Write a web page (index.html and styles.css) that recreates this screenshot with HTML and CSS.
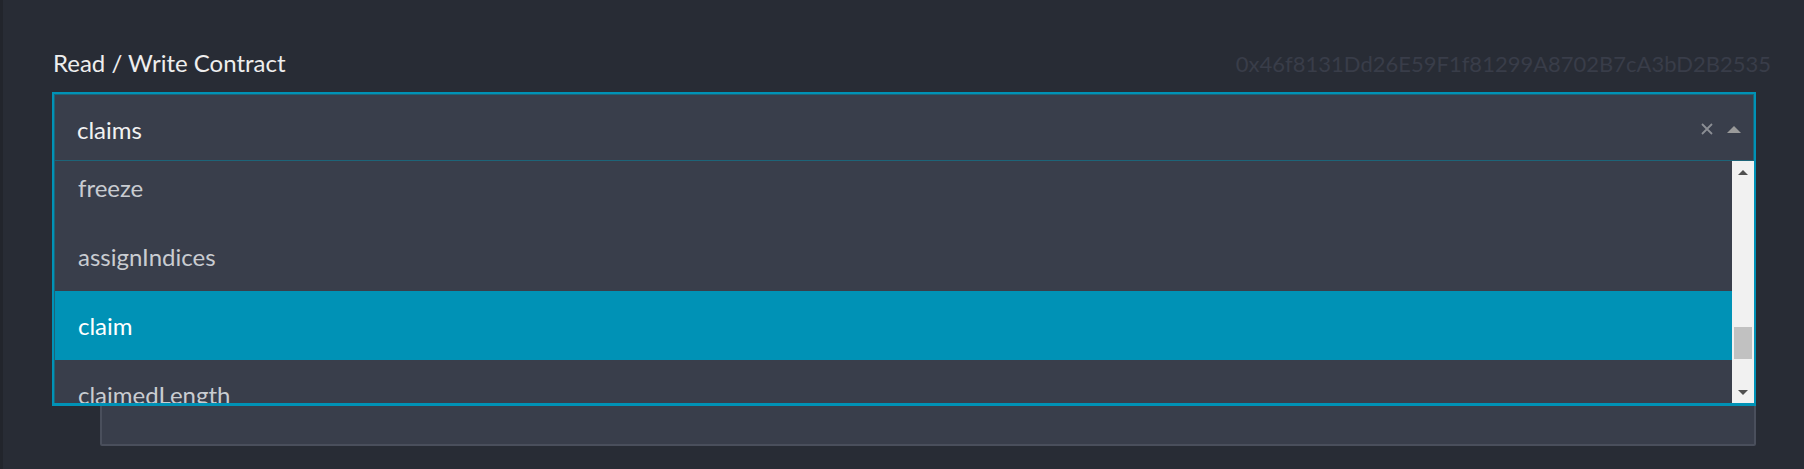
FILE: index.html
```html
<!DOCTYPE html>
<html>
<head>
<meta charset="utf-8">
<link rel="stylesheet" href="styles.css">
</head>
<body>
<div class="page">
  <div class="edge"></div>
  <main class="main">
    <div class="header">
      <div class="label">Read / Write Contract</div>
      <div class="address">0x46f8131Dd26E59F1f81299A8702B7cA3bD2B2535</div>
    </div>
    <div class="select">
      <div class="control">
        <div class="control-inner">
          <div class="value">claims</div>
          <span class="clear">
            <svg width="12" height="12" viewBox="0 0 12 12"><path d="M1 1L11 11M11 1L1 11" stroke="#8b8e94" stroke-width="1.8" fill="none"/></svg>
          </span>
          <span class="caret"></span>
        </div>
      </div>
      <div class="menu">
        <div class="menu-list">
          <div class="menu-inner">
            <div class="option">freeze</div>
            <div class="option">assignIndices</div>
            <div class="option focused">claim</div>
            <div class="option">claimedLength</div>
          </div>
        </div>
        <div class="scrollbar">
          <div class="sb-btn"><span class="tri-up"></span></div>
          <div class="sb-track"><div class="sb-thumb"></div></div>
          <div class="sb-btn"><span class="tri-down"></span></div>
        </div>
      </div>
    </div>
    <div class="lower-box"></div>
  </main>
</div>
</body>
</html>
```
FILE: styles.css
```css
html, body {
  margin: 0;
  padding: 0;
  background: #282c35;
  height: 100%;
  overflow: hidden;
}
.page {
  display: flex;
  height: 469px;
  font-family: Lato, "Open Sans", sans-serif;
}
.edge {
  width: 3px;
  background: #22252c;
}
.main {
  flex: 1;
  padding: 50px 48px 0 49px;
}
.header {
  display: flex;
  justify-content: space-between;
  align-items: baseline;
  height: 26px;
}
.label {
  font-size: 24px;
  line-height: 26px;
  color: #eeeeee;
  padding-left: 1px;
}
.address {
  font-size: 22px;
  line-height: 26px;
  color: #393d49;
  margin-right: -15px;
}
.select {
  position: relative;
  margin-top: 16px;
}
.control {
  border: 2px solid #0092b6;
  border-bottom: 0;
  background: #393e4b;
}
.control-inner {
  height: 65px;
  border: 1px solid #1d6478;
  display: flex;
  align-items: center;
  padding: 0 12px 0 22px;
}
.value {
  flex: 1;
  font-size: 24px;
  color: #f2f2f2;
  padding-top: 3px;
}
.clear {
  display: flex;
  width: 12px;
  height: 12px;
  margin-right: 14px;
  margin-top: 2px;
}
.caret {
  width: 0;
  height: 0;
  border-left: 7px solid transparent;
  border-right: 7px solid transparent;
  border-bottom: 7px solid #9a9a9a;
  margin-top: 3px;
}
.menu {
  position: absolute;
  top: 100%;
  left: 0;
  right: 0;
  height: 245px;
  box-sizing: border-box;
  border: 2px solid #0092b6;
  border-top: 0;
  border-bottom-width: 3px;
  background: #393e4b;
  display: flex;
}
.menu-list {
  flex: 1;
  overflow: hidden;
  border-left: 1px solid #1d6478;
}
.menu-inner {
  margin-top: -8px;
}
.option {
  height: 69px;
  line-height: 69px;
  font-size: 24px;
  color: #c9ccd1;
  padding-left: 23px;
}
.option.focused {
  background: #0092b6;
  color: #ffffff;
  margin-left: -3px;
  padding-left: 26px;
}
.scrollbar {
  width: 22px;
  background: #f1f1f1;
  display: flex;
  flex-direction: column;
}
.sb-btn {
  height: 22px;
  display: flex;
  align-items: center;
  justify-content: center;
}
.sb-track {
  flex: 1;
}
.sb-thumb {
  margin: 144px 2px 0 2px;
  height: 32px;
  background: #c1c1c1;
}
.tri-up {
  width: 0;
  height: 0;
  border-left: 5px solid transparent;
  border-right: 5px solid transparent;
  border-bottom: 5px solid #505050;
}
.tri-down {
  width: 0;
  height: 0;
  border-left: 5px solid transparent;
  border-right: 5px solid transparent;
  border-top: 5px solid #505050;
}
.lower-box {
  margin: 20px 0 0 48px;
  height: 265px;
  box-sizing: border-box;
  border: 2px solid #4a4f5c;
  border-radius: 2px;
  background: #393e4b;
}
```
